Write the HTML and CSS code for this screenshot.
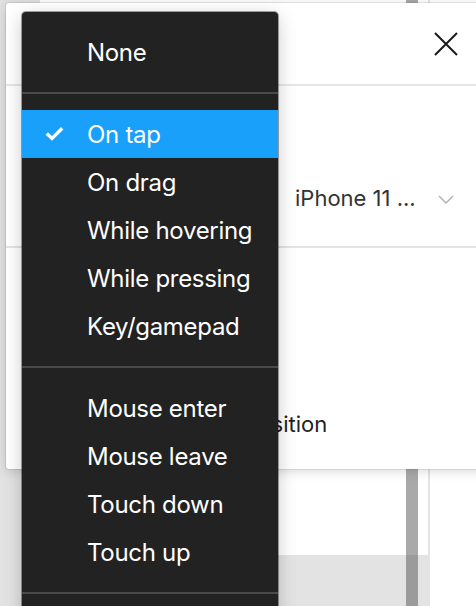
FILE: index.html
```html
<!DOCTYPE html>
<html>
<head>
<meta charset="utf-8">
<link rel="stylesheet" href="styles.css">
</head>
<body>
<div class="page">
  <div class="panel-col">
    <div class="panel-gutter"></div>
    <div class="panel-main">
      <div class="panel-white"></div>
      <div class="panel-gray"></div>
    </div>
  </div>
  <div class="scroll-col">
    <div class="thumb-top"></div>
    <div class="thumb-bottom"></div>
  </div>
  <div class="pad-col">
    <div class="pad-white"></div>
    <div class="pad-gray"></div>
  </div>
  <div class="rule-col"></div>
  <div class="right-col"></div>
</div>

<div class="modal">
  <div class="modal-header">
    <span class="modal-title">Interaction details</span>
    <button class="close-btn" aria-label="Close">
      <svg width="24" height="24" viewBox="0 0 24 24"><path d="M1 1 L23 23 M23 1 L1 23" stroke="#1a1a1a" stroke-width="2" fill="none"/></svg>
    </button>
  </div>
  <div class="modal-section device-section">
    <div class="field-label">Device</div>
    <div class="select">
      <span class="select-text">iPhone 11 ...</span>
      <svg class="chev" width="16" height="9" viewBox="0 0 16 9"><path d="M1 1 L8 8 L15 1" stroke="#b3b3b3" stroke-width="1.5" fill="none"/></svg>
    </div>
  </div>
  <div class="modal-section scroll-section">
    <label class="check-row">
      <span class="checkbox"></span>
      <span class="check-text">Preserve scroll position</span>
    </label>
  </div>
</div>

<div class="menu">
  <div class="menu-group">
    <div class="menu-item">None</div>
  </div>
  <div class="menu-sep"></div>
  <div class="menu-group">
    <div class="menu-item selected">
      <svg class="check" width="19" height="15" viewBox="0 0 19 15"><path d="M1.8 7.6 L7 12.4 L17.2 2.2" stroke="#fff" stroke-width="3.4" fill="none"/></svg>
      On tap
    </div>
    <div class="menu-item">On drag</div>
    <div class="menu-item">While hovering</div>
    <div class="menu-item">While pressing</div>
    <div class="menu-item">Key/gamepad</div>
  </div>
  <div class="menu-sep"></div>
  <div class="menu-group">
    <div class="menu-item">Mouse enter</div>
    <div class="menu-item">Mouse leave</div>
    <div class="menu-item">Touch down</div>
    <div class="menu-item">Touch up</div>
  </div>
  <div class="menu-sep"></div>
  <div class="menu-tail"></div>
</div>
</body>
</html>
```

FILE: styles.css
```css
html, body {
  margin: 0;
  padding: 0;
  width: 476px;
  height: 606px;
  overflow: hidden;
  background: #e3e3e3;
  font-family: Inter, "Noto Sans", sans-serif;
}

.page {
  display: flex;
  height: 606px;
}

.panel-col {
  display: flex;
  width: 406px;
}
.panel-gutter {
  width: 40px;
  background: #e2e2e2;
}
.panel-main {
  flex: 1;
  display: flex;
  flex-direction: column;
}
.panel-white {
  height: 555px;
  background: #ffffff;
}
.panel-gray {
  flex: 1;
  background: #e3e3e3;
}

.scroll-col {
  width: 12px;
  display: flex;
  flex-direction: column;
}
.thumb-top {
  height: 555px;
  background: #a9a9a9;
}
.thumb-bottom {
  flex: 1;
  background: #9b9b9b;
}

.pad-col {
  width: 10px;
  display: flex;
  flex-direction: column;
}
.pad-white {
  height: 555px;
  background: #ffffff;
}
.pad-gray {
  flex: 1;
  background: #e3e3e3;
}

.rule-col {
  width: 2px;
  background: #e4e4e4;
}
.right-col {
  flex: 1;
  background: #ffffff;
}

/* Modal */
.modal {
  position: absolute;
  left: 6px;
  top: 3px;
  width: 490px;
  height: 466px;
  background: #ffffff;
  border-radius: 3px;
  box-shadow: 0 0 0 1px rgba(0,0,0,0.08), 0 2px 12px rgba(0,0,0,0.16);
  display: flex;
  flex-direction: column;
}
.modal-header {
  height: 81px;
  flex: none;
  display: flex;
  align-items: center;
  justify-content: space-between;
  padding: 0 0 0 32px;
  border-bottom: 2px solid #e6e6e6;
  box-sizing: content-box;
}
.modal-title {
  font-size: 22px;
  font-weight: 600;
  color: #222;
}
.close-btn {
  width: 24px;
  height: 24px;
  padding: 0;
  margin-right: 38px;
  border: 0;
  background: transparent;
  display: flex;
}

.modal-section {
  display: flex;
}
.device-section {
  align-items: center;
  padding-top: 64px;
  height: 96px;
  border-bottom: 2px solid #e3e3e3;
  box-sizing: content-box;
}
.field-label {
  width: 289px;
  padding-left: 32px;
  box-sizing: border-box;
  font-size: 22px;
  color: #333;
}
.select {
  display: flex;
  align-items: center;
  width: 160px;
}
.select-text {
  font-size: 22px;
  color: #333;
  white-space: nowrap;
}
.chev {
  margin-left: 22px;
  margin-top: 2px;
}

.scroll-section {
  flex: 1;
  align-items: flex-end;
  padding-bottom: 32px;
}
.check-row {
  display: flex;
  align-items: center;
  padding-left: 44px;
  gap: 14px;
}
.checkbox {
  width: 20px;
  height: 20px;
  border: 2px solid #333;
  border-radius: 2px;
  box-sizing: border-box;
}
.check-text {
  font-size: 22px;
  color: #222;
}

/* Dropdown menu */
.menu {
  position: absolute;
  left: 22px;
  top: 12px;
  width: 256px;
  padding-top: 16px;
  background: #222222;
  border-radius: 4px;
  box-shadow: 0 0 0 1px rgba(0,0,0,0.35), 0 4px 18px rgba(0,0,0,0.22);
}
.menu-item {
  position: relative;
  height: 48px;
  display: flex;
  align-items: center;
  padding-left: 65px;
  font-size: 24px;
  letter-spacing: -0.3px;
  color: #ffffff;
  white-space: nowrap;
}
.menu-item.selected {
  background: #18a0fb;
}
.check {
  position: absolute;
  left: 23px;
  top: 16px;
}
.menu-sep {
  height: 2px;
  background: #4b4b4b;
  margin: 16px 0;
}
.menu-tail {
  height: 64px;
}
```
